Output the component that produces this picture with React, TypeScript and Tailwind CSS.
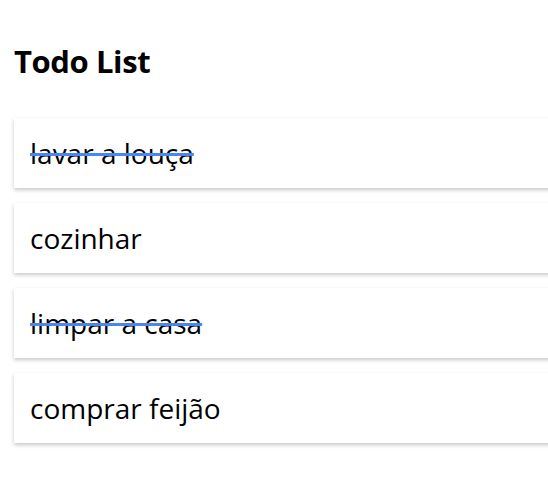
import * as React from "react"

const todos = [
  { text: "lavar a louça", done: true },
  { text: "cozinhar", done: false },
  { text: "limpar a casa", done: true },
  { text: "comprar feijão", done: false },
]

export default function App() {
  return (
    <div className="min-h-[496px] overflow-hidden bg-white font-['Open_Sans','Noto_Sans',sans-serif] text-black">
      <div className="pl-[14px] pt-[41px]">
        <h1 className="text-[31px] font-bold leading-[40px] tracking-[-0.4px]">Todo List</h1>

        <ul className="mt-[37px] flex w-[560px] flex-col gap-[15px]">
          {todos.map((todo, i) => (
            <li
              key={i}
              className="flex h-[70px] items-center bg-white px-4 shadow-[0_2px_4px_rgba(0,0,0,0.22)]"
            >
              <span
                className={
                  "text-[28px] font-normal leading-none " +
                  (todo.done ? "line-through decoration-[#4a86f0] decoration-[3px]" : "")
                }
              >
                {todo.text}
              </span>
            </li>
          ))}
        </ul>
      </div>
    </div>
  )
}
